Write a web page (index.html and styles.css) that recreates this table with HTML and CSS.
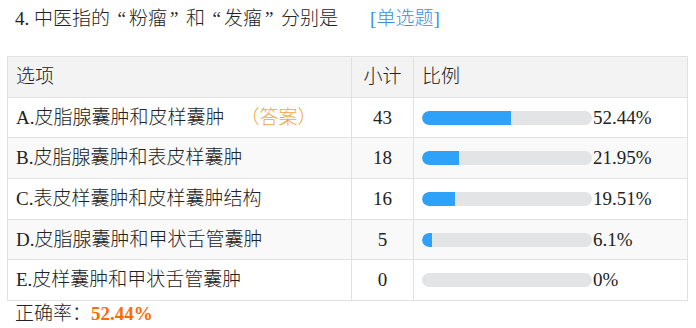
FILE: index.html
```html
<!DOCTYPE html>
<html lang="zh-CN">
<head>
<meta charset="utf-8">
<title>单选题统计</title>
<link rel="stylesheet" href="styles.css">
</head>
<body>
<div class="question">
  <div class="title">4. 中医指的<span class="q q-open">“</span>粉瘤<span class="q q-close">”</span>和<span class="q q-open">“</span>发瘤<span class="q q-close">”</span>分别是<span class="type">[单选题]</span></div>
  <table class="stats">
    <thead>
      <tr><th class="c-opt">选项</th><th class="c-num">小计</th><th class="c-bar">比例</th></tr>
    </thead>
    <tbody>
      <tr>
        <td class="c-opt">A.皮脂腺囊肿和皮样囊肿<span class="answer">（答案）</span></td>
        <td class="c-num">43</td>
        <td class="c-bar"><div class="bar-wrap"><div class="bar"><div class="fill" style="width:52.44%"></div></div><span class="pct">52.44%</span></div></td>
      </tr>
      <tr>
        <td class="c-opt">B.皮脂腺囊肿和表皮样囊肿</td>
        <td class="c-num">18</td>
        <td class="c-bar"><div class="bar-wrap"><div class="bar"><div class="fill" style="width:21.95%"></div></div><span class="pct">21.95%</span></div></td>
      </tr>
      <tr>
        <td class="c-opt">C.表皮样囊肿和皮样囊肿结构</td>
        <td class="c-num">16</td>
        <td class="c-bar"><div class="bar-wrap"><div class="bar"><div class="fill" style="width:19.51%"></div></div><span class="pct">19.51%</span></div></td>
      </tr>
      <tr>
        <td class="c-opt">D.皮脂腺囊肿和甲状舌管囊肿</td>
        <td class="c-num">5</td>
        <td class="c-bar"><div class="bar-wrap"><div class="bar"><div class="fill" style="width:6.1%"></div></div><span class="pct">6.1%</span></div></td>
      </tr>
      <tr>
        <td class="c-opt">E.皮样囊肿和甲状舌管囊肿</td>
        <td class="c-num">0</td>
        <td class="c-bar"><div class="bar-wrap"><div class="bar"><div class="fill" style="width:0%"></div></div><span class="pct">0%</span></div></td>
      </tr>
    </tbody>
  </table>
  <div class="rate">正确率：<span class="rate-val">52.44%</span></div>
</div>
</body>
</html>
```
FILE: styles.css
```css
html, body {
  margin: 0;
  padding: 0;
  background: #ffffff;
}
body {
  font-family: "Liberation Serif", "Noto Sans CJK SC", serif;
  font-weight: 300;
  color: #222222;
}
.question {
  padding: 0 8px 0 7px;
}
.title {
  font-size: 19px;
  line-height: 38px;
  padding-left: 8px;
  white-space: nowrap;
}
.q {
  display: inline-block;
  width: 1em;
  font-family: "Liberation Serif", serif;
}
.q-open { text-align: right; padding-right: 3px; box-sizing: border-box; }
.q-close { text-align: left; padding-left: 3px; box-sizing: border-box; }
.type {
  color: #3d8ee0;
  margin-left: 32px;
}
.stats {
  margin-top: 18px;
  width: 681px;
  border-collapse: collapse;
  font-size: 19px;
  table-layout: fixed;
}
.stats th, .stats td {
  border: 1px solid #e1e1e1;
  height: 40.7px;
  padding: 0 0 0 8px;
  font-weight: 300;
  text-align: left;
  line-height: 24px;
  box-sizing: border-box;
  white-space: nowrap;
}
.stats thead tr {
  background: #f3f3f3;
}
.stats tbody tr:nth-child(even) {
  background: #f9f9f9;
}
.c-opt { width: 344px; }
.stats .c-num {
  width: 62px;
  text-align: center;
  padding: 0;
}
.answer {
  color: #f5a640;
  margin-left: 16px;
}
.bar-wrap {
  display: flex;
  align-items: center;
}
.bar {
  width: 170px;
  height: 14px;
  border-radius: 7px;
  background: #e3e4e6;
  overflow: hidden;
  flex: none;
}
.fill {
  height: 100%;
  background: #2ea2f8;
  border-radius: 7px 0 0 7px;
}
.pct {
  margin-left: 1px;
}
.rate {
  font-size: 19px;
  line-height: 26px;
  padding-left: 8px;
}
.rate-val {
  color: #ff6a00;
  font-weight: bold;
}
```
